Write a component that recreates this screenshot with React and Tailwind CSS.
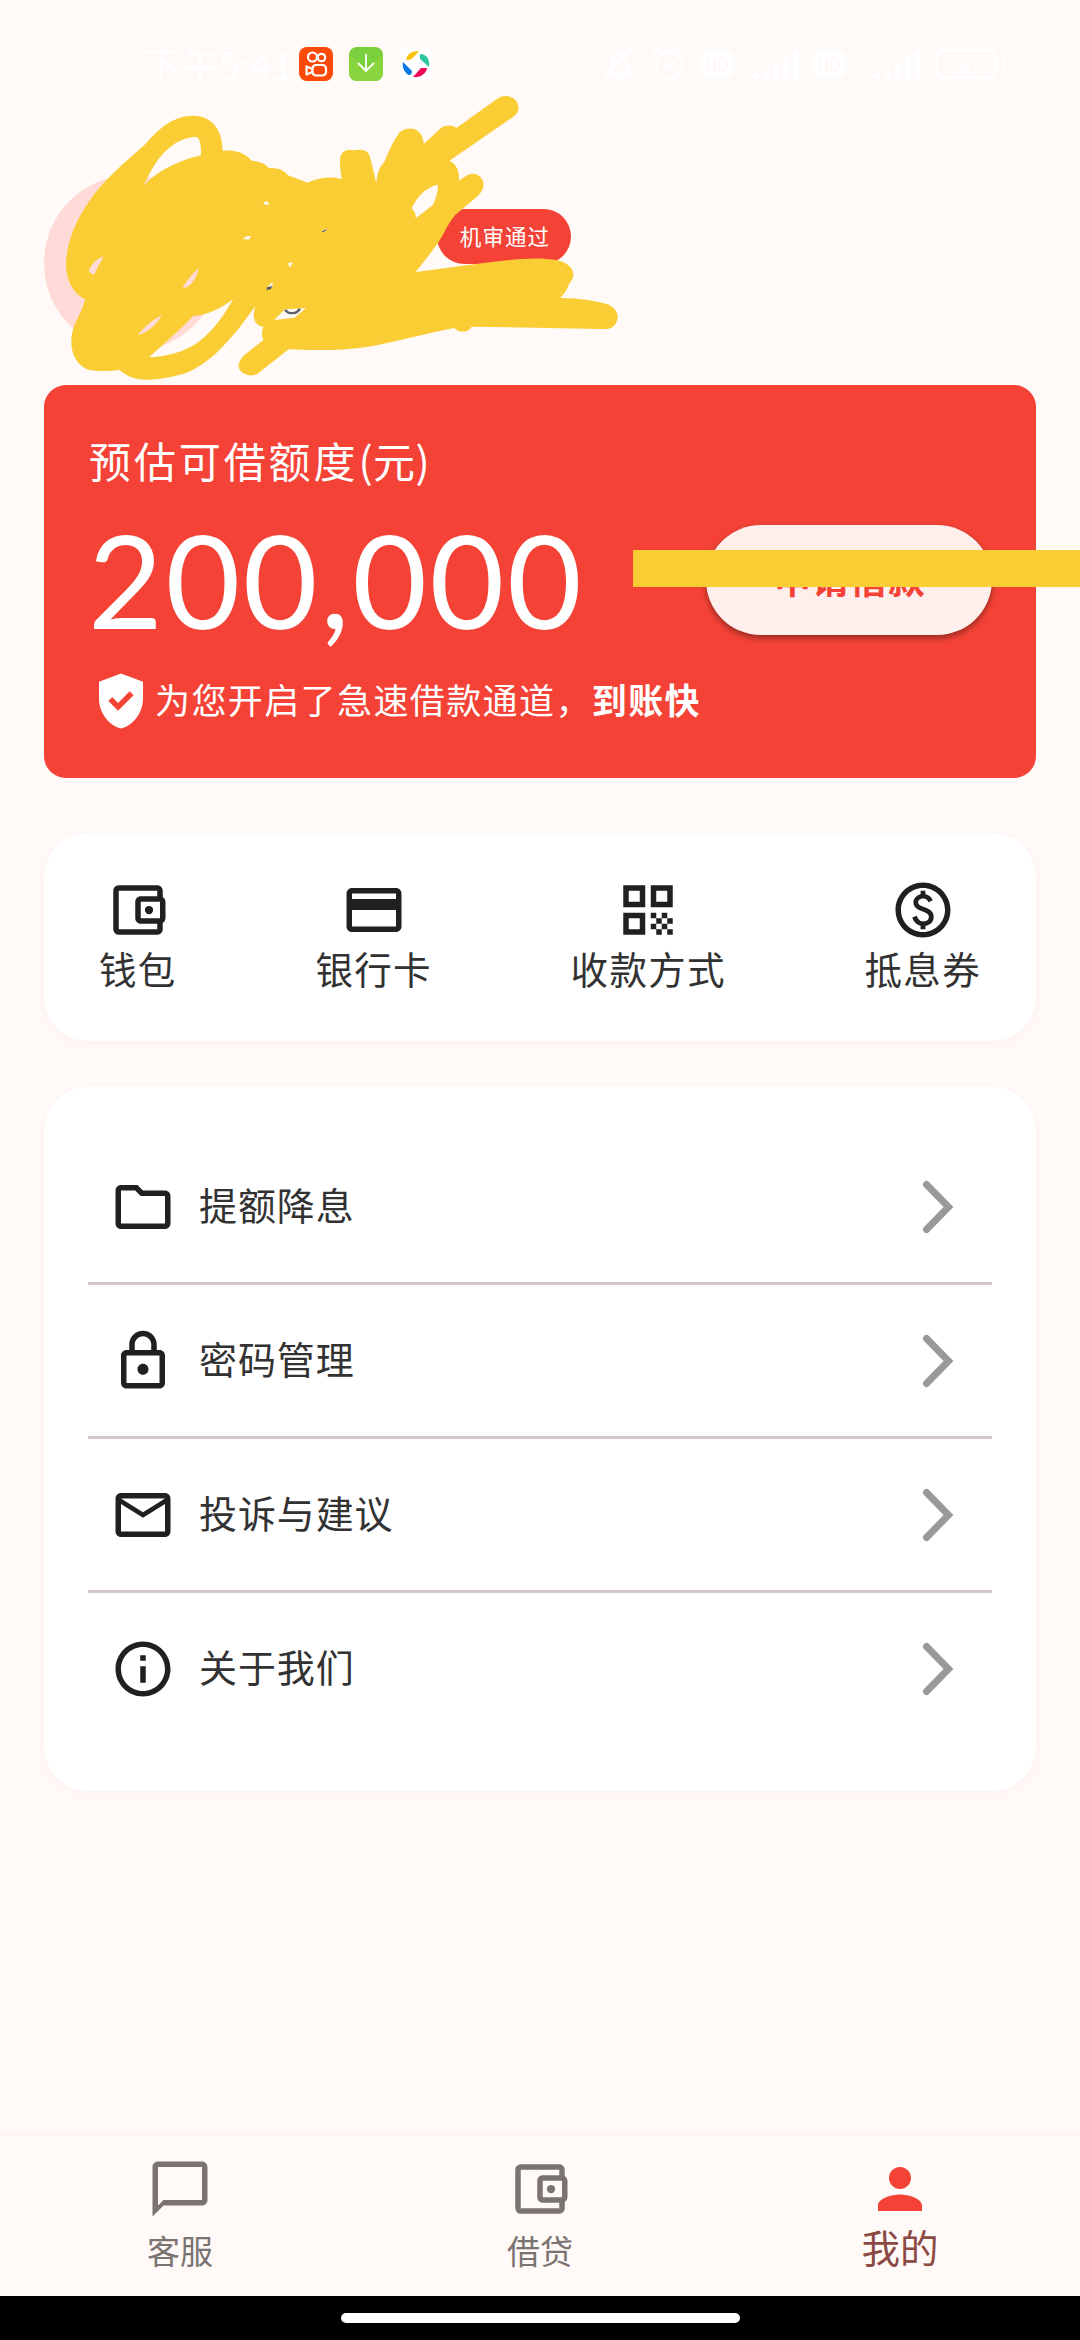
import React from "react";
import {
  MdGppGood,
  MdOutlineAccountBalanceWallet,
  MdOutlineCreditCard,
  MdQrCode,
  MdOutlinePaid,
  MdInfoOutline,
  MdChatBubbleOutline,
  MdPerson,
} from "react-icons/md";

const LockIcon = ({ size = 66, className = "" }) => (
  <svg width={size} height={size} viewBox="0 0 24 24" fill="currentColor" className={className}>
    <path d="M18 8h-1V6c0-2.76-2.24-5-5-5S7 3.24 7 6v2H6c-1.1 0-2 .9-2 2v10c0 1.1.9 2 2 2h12c1.1 0 2-.9 2-2V10c0-1.1-.9-2-2-2zM9 6c0-1.66 1.34-3 3-3s3 1.34 3 3v2H9V6zm9 14H6V10h12v10zm-6-3c1.1 0 2-.9 2-2s-.9-2-2-2-2 .9-2 2 .9 2 2 2z" />
  </svg>
);

const FolderIcon = ({ size = 66, className = "" }) => (
  <svg width={size} height={size} viewBox="0 0 24 24" fill="currentColor" className={className}>
    <path d="M9.17 6l2 2H20v10H4V6h5.17M10 4H4c-1.1 0-1.99.9-1.99 2L2 18c0 1.1.9 2 2 2h16c1.1 0 2-.9 2-2V8c0-1.1-.9-2-2-2h-8l-2-2z" />
  </svg>
);

const MailIcon = ({ size = 66, className = "" }) => (
  <svg width={size} height={size} viewBox="0 0 24 24" fill="currentColor" className={className}>
    <path d="M20 4H4c-1.1 0-1.99.9-1.99 2L2 18c0 1.1.9 2 2 2h16c1.1 0 2-.9 2-2V6c0-1.1-.9-2-2-2zm0 14H4V8l8 5 8-5v10zm-8-7L4 6h16l-8 5z" />
  </svg>
);

const shortcuts = [
  { label: "钱包", Icon: MdOutlineAccountBalanceWallet },
  { label: "银行卡", Icon: MdOutlineCreditCard },
  { label: "收款方式", Icon: MdQrCode },
  { label: "抵息券", Icon: MdOutlinePaid },
];

const menu = [
  { label: "提额降息", Icon: FolderIcon },
  { label: "密码管理", Icon: LockIcon },
  { label: "投诉与建议", Icon: MailIcon },
  { label: "关于我们", Icon: MdInfoOutline },
];

const tabs = [
  { label: "客服", Icon: MdChatBubbleOutline },
  { label: "借贷", Icon: MdOutlineAccountBalanceWallet },
  { label: "我的", Icon: MdPerson, active: true },
];

function Signal({ className = "" }) {
  return (
    <div className={`flex items-end ${className}`}>
      <span className="self-start text-base leading-none">5G</span>
      <svg width="48" height="32" viewBox="0 0 48 32" fill="currentColor" className="-ml-1">
        <circle cx="3.500" cy="28" r="3" />
        <path d="M11 22h6v9h-6zM21 16h6v15h-6zM31 9h6v22h-6zM41 3h6v28h-6z" />
      </svg>
    </div>
  );
}

function HdBadge() {
  return (
    <span className="flex h-[28px] w-8 items-center justify-center rounded-md bg-white text-[17px] text-[#fff6f4]">
      HD
    </span>
  );
}

function StatusBar() {
  return (
    <div className="flex h-32 items-center pl-[143px] text-white">
      <span className="w-[156px] text-[38px] leading-none whitespace-nowrap">下午5:41</span>

      <div className="flex gap-4">
        <svg width="34" height="34" viewBox="0 0 34 34">
          <rect width="34" height="34" rx="8" fill="#fd4a08" />
          <g fill="none" stroke="#fff" strokeWidth="2.200">
            <circle cx="13.500" cy="10" r="4.500" />
            <circle cx="22.500" cy="10.500" r="3.700" />
            <rect x="13.500" y="18" width="13.500" height="10.500" rx="3.500" />
            <path d="M13.500 22 7.500 19.500v8l6-2.500" strokeLinejoin="round" />
          </g>
        </svg>
        <svg width="34" height="34" viewBox="0 0 34 34">
          <rect width="34" height="34" rx="8" fill="#79cf3c" />
          <path d="M0 8 17 20 34 8v18a8 8 0 0 1-8 8H8a8 8 0 0 1-8-8z" fill="#88d53f" />
          <path d="M17 7v17M9 16l8 8 8-8" fill="none" stroke="#fff" strokeWidth="1.800" />
        </svg>
        <svg width="34" height="34" viewBox="0 0 34 34">
          <rect width="34" height="34" rx="8" fill="#fff" />
          <path d="M7 13C8 7 13 3 20 4.500L12 12.500z" fill="#fcc00e" />
          <path d="M21 7C28 7 31 13 30 20L21 12z" fill="#2bc8a0" />
          <path d="M4 15 13 24C13 28 10 29 8 27C5 24 3 20 4 15z" fill="#0b78e8" />
          <path d="M22 21H28C27 27 21 31 14 30z" fill="#ee0a5a" />
        </svg>
      </div>

      <div className="ml-[168px] flex items-center gap-[13px]">
        <svg width="36" height="34" viewBox="0 0 36 34" fill="none" stroke="currentColor" strokeWidth="3">
          <path d="M8 27h24M9 26c4-6 0-17 9-20 10 3 6 14 11 20M3 30 30 2M15 31h7" />
        </svg>
        <svg width="38" height="34" viewBox="0 0 38 34" fill="none" stroke="currentColor" strokeWidth="3">
          <circle cx="19" cy="18" r="13" />
          <path d="M13 16l5 5 8-8M2 8l7-6M36 8l-7-6" />
        </svg>
        <HdBadge />
        <Signal className="-ml-2.5" />
        <HdBadge />
        <Signal />
        <div className="flex items-center gap-1">
          <span className="flex h-[30px] w-[62px] items-center justify-center rounded-lg border-[3px] border-white text-[22px] leading-none">80</span>
          <span className="h-3 w-1 rounded-r bg-white" />
        </div>
      </div>
    </div>
  );
}

// marker strokes drawn over the avatar and the user name
function Scribble() {
  return (
    <svg
      className="absolute top-[90px] left-10"
      width="600"
      height="300"
      viewBox="0 0 1568 900"
      preserveAspectRatio="none"
    >
      <path
        fill="#facd34"
        fillRule="evenodd"
        d="M400 77C445 77 478 115 477 182C510 178 535 188 553 212C575 214 590 222 598 234C625 232 640 244 648 256L700 278C725 263 765 257 789 268C784 240 783 215 785 200C790 180 805 178 820 181C840 176 858 180 862 200C868 225 874 255 879 279C882 250 884 235 900 215C912 180 925 150 940 127C960 107 1000 110 1003 162L1045 117C1060 103 1080 105 1088 114L1195 26C1225 5 1255 30 1250 60C1248 70 1240 78 1230 86L1070 212C1088 222 1096 240 1095 272L1110 260C1130 240 1160 255 1159 285C1158 305 1145 318 1135 327L1085 375C1070 395 1060 420 1050 440L1040 460C1020 490 1000 520 982 546C1060 535 1150 520 1220 511C1260 505 1310 502 1350 510C1385 518 1400 545 1392 565C1385 580 1382 582 1380 590C1375 605 1368 612 1360 624C1410 625 1450 632 1480 642C1515 655 1515 690 1500 707C1492 717 1480 717 1465 717L1128 710C1120 728 1095 730 1082 714C1010 730 940 752 870 768C800 782 720 782 650 778L570 850C550 865 520 850 519 828C520 810 530 797 545 785L584 750C578 735 580 720 584 710C560 708 553 680 563 648L520 715C480 770 440 820 390 845C350 862 300 870 270 869C240 866 225 856 208 840C180 843 150 845 130 840C90 825 80 780 82 745C85 700 110 670 118 628C85 610 68 570 68 520C70 460 90 400 125 340C165 270 220 220 275 163C310 115 350 77 400 77Z
        M412 142C395 138 365 150 345 167C310 195 290 240 270 288C300 250 350 215 420 196C422 175 420 155 412 142Z
        M1040 284C1010 290 985 320 971 355C978 362 982 372 982 384C1000 370 1015 355 1027 345C1035 325 1040 305 1040 284Z
        M505 627C470 658 435 676 400 678C370 715 325 760 285 802C330 800 380 785 415 755C460 715 480 675 505 627Z
        M166 498C145 508 128 530 128 545L141 556C148 535 158 520 166 498Z
        M415 535C398 550 380 577 373 595C392 593 408 570 415 535Z
        M318 677C295 685 270 715 255 735C275 732 305 705 318 677Z
        M583 340L592 333L600 342L590 345Z
        M530 447L540 439L553 438L545 449Z
        M648 520L661 516L653 534Z
        M592 595L607 576L608 590L596 600Z
        M736 426L742 418L752 418L741 426Z
        M640 658L612 690L665 683L695 655Z"
      />
      <path d="M593 592l14-4-4 10-11 2zM736 426l6-6 10-2-11 8z" fill="#5a5558" />
      <path d="M641 659C648 673 671 674 679 656" fill="none" stroke="#5f6268" strokeWidth="7" />
    </svg>
  );
}

function Profile() {
  return (
    <div className="flex h-[257px] items-start pt-[47px] pl-11">
      <div className="h-[176px] w-[176px] rounded-full bg-[#ffdad6]" />
      <span className="mt-[34px] ml-[217px] flex h-[55px] w-[134px] items-center justify-center rounded-full bg-[#f44336] pl-[2px] text-[21.500px] tracking-[1.100px] text-white">
        机审通过
      </span>
    </div>
  );
}

function QuotaCard() {
  return (
    <section className="relative mx-11 h-[393px] rounded-[22px] bg-[#f44336] px-11 pt-11 text-white">
      <h2 className="h-[66px] pl-px text-[42px] leading-[62px] tracking-[2.900px]">
        预估可借额度<span className="tracking-[0.500px]">(元)</span>
      </h2>
      <div className="mt-[30px] flex h-[110px] items-center justify-between">
        <span className="pb-0.5 font-['Lato'] text-[129px] leading-[106px] tracking-[2.600px]">200,000</span>
        <button
          type="button"
          className="h-[110px] w-[286px] rounded-full bg-[#ffefec] pb-0.5 pl-0.5 text-[37px] font-bold tracking-[1px] text-[#f44336] shadow-[0_3px_6px_rgba(0,0,0,0.4)]"
        >
          申请借款
        </button>
      </div>
      <div className="mt-[33px] flex h-[66px] items-center text-[35px] tracking-[1.400px]">
        <MdGppGood size={66} />
        <p className="pb-1 pl-px">
          为您开启了急速借款通道，<b>到账快</b>
        </p>
      </div>
      {/* marker line across the button */}
      <div className="absolute top-[165px] -right-11 h-[37px] w-[447px] bg-[#facd34]" />
    </section>
  );
}

export default function App() {
  return (
    <div
      lang="zh-CN"
      className="relative flex h-[2340px] w-[1080px] flex-col overflow-hidden bg-[#fff9f7] font-['Noto_Sans_CJK_SC',sans-serif] text-[#323232]"
    >
      <StatusBar />
      <Profile />
      <QuotaCard />
      <Scribble />

      <section className="mx-11 mt-[55px] flex h-[208px] justify-between rounded-[44px] bg-white px-[55px] pt-11 shadow-[0_2px_14px_rgba(244,67,54,0.03)]">
        {shortcuts.map(({ label, Icon }) => (
          <div key={label} className="flex flex-col items-center">
            <Icon size={66} className="text-[#202020]" />
            <span className="text-[37.500px] leading-[50px] tracking-[1.300px]">{label}</span>
          </div>
        ))}
      </section>

      <section className="mx-11 mt-[46px] h-[704px] rounded-[44px] bg-white p-11 shadow-[0_2px_14px_rgba(244,67,54,0.03)]">
        {menu.map(({ label, Icon }, i) => (
          <div
            key={label}
            className={`flex h-[154px] items-center border-b-[3px] px-[22px] ${
              i < menu.length - 1 ? "border-[#d3c8c5]" : "border-transparent"
            }`}
          >
            <Icon size={66} className="text-[#202020]" />
            <span className="ml-[23px] flex-1 pb-1.5 text-[38px] tracking-[0.900px]">{label}</span>
            <svg width="66" height="66" viewBox="0 0 66 66" className="text-[#999]">
              <path d="M22.500 10.500 44.500 33 22.500 55.500" fill="none" stroke="currentColor" strokeWidth="7" strokeLinecap="round" />
            </svg>
          </div>
        ))}
      </section>

      <nav className="mt-auto grid h-[160px] grid-cols-3 shadow-[0_-2px_8px_rgba(244,67,54,0.04)]">
        {tabs.map(({ label, Icon, active }) => (
          <div key={label} className="flex flex-col items-center pt-5">
            <Icon size={66} className={active ? "text-[#f44336]" : "text-[#7b7372]"} />
            {active ? (
              <span className="text-[38.500px] leading-[48px] text-[#8c4a44]">{label}</span>
            ) : (
              <span className="mt-1 text-[33px] leading-[49px] text-[#7b7372]">{label}</span>
            )}
          </div>
        ))}
      </nav>
      <div className="flex h-11 justify-center bg-black pt-[17px]">
        <div className="h-2.5 w-[399px] rounded-full bg-white" />
      </div>
    </div>
  );
}
